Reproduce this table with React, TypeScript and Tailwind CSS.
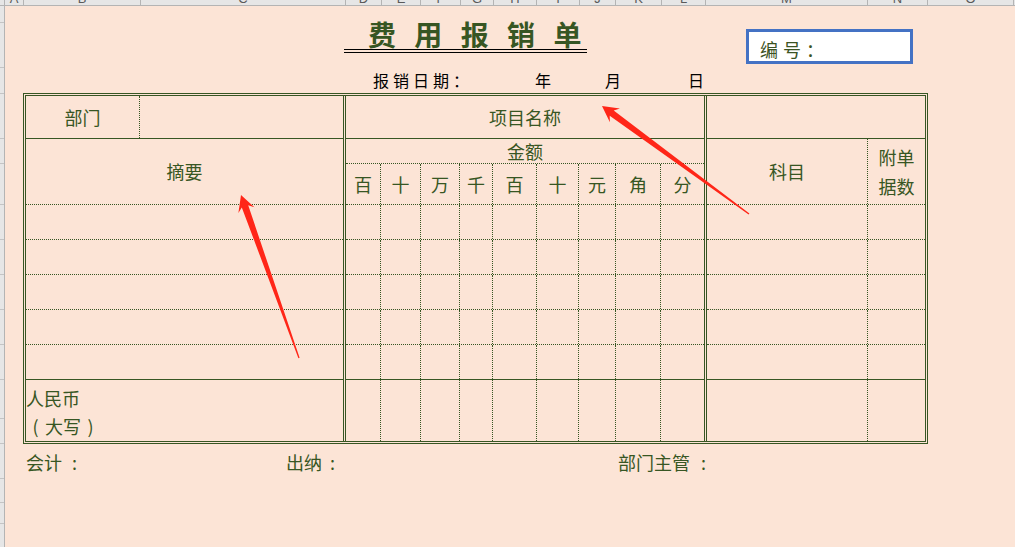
import React from "react";

const digitW = [
  "w-[35px]",
  "w-[40px]",
  "w-[39px]",
  "w-[33px]",
  "w-[44px]",
  "w-[42px]",
  "w-[37px]",
  "w-[45px]",
  "w-[43px]",
];
const digits = ["百", "十", "万", "千", "百", "十", "元", "角", "分"];

const cols: { w: string; l: string }[] = [
  { w: "w-[5px]", l: "" },
  { w: "w-[19px]", l: "A" },
  { w: "w-[117px]", l: "B" },
  { w: "w-[205px]", l: "C" },
  { w: "w-[36px]", l: "D" },
  { w: "w-[39px]", l: "E" },
  { w: "w-[40px]", l: "F" },
  { w: "w-[33px]", l: "G" },
  { w: "w-[43px]", l: "H" },
  { w: "w-[43px]", l: "I" },
  { w: "w-[36px]", l: "J" },
  { w: "w-[46px]", l: "K" },
  { w: "w-[44px]", l: "L" },
  { w: "w-[162px]", l: "M" },
  { w: "w-[60px]", l: "N" },
  { w: "w-[86px]", l: "O" },
];

const rowH = [
  "h-[17px]",
  "h-[45px]",
  "h-[26px]",
  "h-[45px]",
  "h-[25px]",
  "h-[41px]",
  "h-[35px]",
  "h-[35px]",
  "h-[35px]",
  "h-[35px]",
  "h-[35px]",
  "h-[39px]",
  "h-[25px]",
  "h-[35px]",
  "h-[24px]",
  "h-[21px]",
];

function arrowPts(tx: number, ty: number, sx: number, sy: number) {
  const dx = tx - sx;
  const dy = ty - sy;
  const L = Math.hypot(dx, dy);
  const ux = dx / L;
  const uy = dy / L;
  const nx = -uy;
  const ny = ux;
  const H = 16;
  const N = 12;
  const W = 8.5;
  const S = 3.4;
  const T = 0.6;
  const p = (a: number, b: number) => `${a.toFixed(1)},${b.toFixed(1)}`;
  return [
    p(tx, ty),
    p(tx - H * ux + W * nx, ty - H * uy + W * ny),
    p(tx - N * ux + S * nx, ty - N * uy + S * ny),
    p(sx + T * nx, sy + T * ny),
    p(sx - T * nx, sy - T * ny),
    p(tx - N * ux - S * nx, ty - N * uy - S * ny),
    p(tx - H * ux - W * nx, ty - H * uy - W * ny),
  ].join(" ");
}

function DigitCells({ labels }: { labels?: string[] }) {
  return (
    <>
      {digitW.map((w, i) => (
        <div
          key={i}
          className={
            w +
            " h-full flex items-center justify-center border-[#375623] " +
            (i < 8 ? "border-r border-dotted" : "")
          }
        >
          {labels ? labels[i] : null}
        </div>
      ))}
    </>
  );
}

export default function App() {
  const bodyRows = [0, 1, 2, 3, 4];
  return (
    <div className="relative w-[1015px] h-[547px] overflow-hidden bg-[#fce4d6] font-['Noto_Sans_CJK_SC',sans-serif] text-[#375623]">
      {/* Excel column header */}
      <div className="flex h-[6px] bg-[#e6e6e6] border-b border-[#b4b4b4] overflow-hidden">
        {cols.map((c, i) => (
          <div
            key={i}
            className={
              c.w +
              " h-full border-r border-[#b4b4b4] flex items-end justify-center overflow-hidden"
            }
          >
            <span className="text-[13px] leading-[13px] text-[#5a5a5a] font-['Liberation_Sans',sans-serif]">
              {c.l}
            </span>
          </div>
        ))}
        <div className="flex-1" />
      </div>

      <div className="flex">
        {/* Excel row header strip */}
        <div className="w-[5px] h-[541px] bg-[#e6e6e6] border-r border-[#b4b4b4] flex flex-col">
          {rowH.map((h, i) => (
            <div key={i} className={h + " border-b border-[#c4c4c4]"} />
          ))}
        </div>

        {/* Sheet content */}
        <div className="flex-1 flex flex-col">
          {/* Title row */}
          <div className="flex h-[60px]">
            <div className="ml-[339px] mt-[14px] w-[243px]">
              <div className="h-[29px] leading-[28px] text-[28px] font-bold text-[#375623] pl-[24px] tracking-[6px] whitespace-pre">
                费 用 报 销 单
              </div>
              <div className="h-px bg-black" />
              <div className="h-px bg-black mt-[2px]" />
            </div>
            <div className="ml-[159px] mt-[23px] w-[167px] h-[35px] bg-white border-[3px] border-[#4472c4] flex items-center pl-[11px] pt-[5px] text-[18px] leading-[24px] tracking-[5px] text-[#3b5323]">
              编号：
            </div>
          </div>

          {/* Date row */}
          <div className="flex h-[27px] pt-[4px] text-[16px] leading-[20px] text-black">
            <span className="ml-[368px] w-[162px] tracking-[4px]">报销日期：</span>
            <span className="w-[70px]">年</span>
            <span className="w-[83px]">月</span>
            <span>日</span>
          </div>

          {/* Table */}
          <div className="ml-[18px] w-[905px] h-[351px] border-[3px] border-double border-[#375623] flex text-[18px]">
            {/* Left box */}
            <div className="w-[317px] flex flex-col">
              <div className="h-[43px] border-b border-[#375623] flex">
                <div className="w-[114px] h-full border-r border-dotted border-[#375623] flex items-center justify-center">
                  部门
                </div>
              </div>
              <div className="h-[66px] border-b border-dotted border-[#375623] flex items-center justify-center">
                摘要
              </div>
              {bodyRows.map((r) => (
                <div
                  key={r}
                  className={
                    r < 4
                      ? "h-[35px] border-b border-dotted border-[#375623]"
                      : "h-[35px] border-b border-[#375623]"
                  }
                />
              ))}
              <div className="flex-1 pt-[4px] leading-[28px]">
                <div>人民币</div>
                <div className="flex">
                  <span className="w-[19px] text-center">(</span>
                  <span>大写</span>
                  <span className="w-[19px] text-center">)</span>
                </div>
              </div>
            </div>

            {/* Middle box */}
            <div className="w-[364px] border-x-[3px] border-double border-[#375623] flex flex-col">
              <div className="h-[43px] border-b border-[#375623] flex items-center justify-center">
                项目名称
              </div>
              <div className="h-[25px] border-b border-dotted border-[#375623] flex items-center justify-center leading-[24px]">
                金额
              </div>
              <div className="h-[41px] border-b border-dotted border-[#375623] flex">
                <DigitCells labels={digits} />
              </div>
              {bodyRows.map((r) => (
                <div
                  key={r}
                  className={
                    r < 4
                      ? "h-[35px] border-b border-dotted border-[#375623] flex"
                      : "h-[35px] border-b border-[#375623] flex"
                  }
                >
                  <DigitCells />
                </div>
              ))}
              <div className="flex-1 flex">
                <DigitCells />
              </div>
            </div>

            {/* Right box */}
            <div className="w-[218px] flex flex-col">
              <div className="h-[43px] border-b border-[#375623]" />
              <div className="h-[66px] border-b border-dotted border-[#375623] flex">
                <div className="w-[161px] h-full border-r border-dotted border-[#375623] flex items-center justify-center">
                  科目
                </div>
                <div className="flex-1 flex flex-col items-center justify-center leading-[29px]">
                  <div>附单</div>
                  <div>据数</div>
                </div>
              </div>
              {bodyRows.map((r) => (
                <div
                  key={r}
                  className={
                    r < 4
                      ? "h-[35px] border-b border-dotted border-[#375623] flex"
                      : "h-[35px] border-b border-[#375623] flex"
                  }
                >
                  <div className="w-[161px] h-full border-r border-dotted border-[#375623]" />
                </div>
              ))}
              <div className="flex-1 flex">
                <div className="w-[161px] h-full border-r border-dotted border-[#375623]" />
              </div>
            </div>
          </div>

          {/* Footer */}
          <div className="flex mt-[6px] text-[18px] leading-[24px] text-[#375623]">
            <span className="ml-[21px] w-[260px]">
              会计<span className="ml-[10px]">:</span>
            </span>
            <span className="w-[332px]">
              出纳<span className="ml-[8px]">:</span>
            </span>
            <span>
              部门主管<span className="ml-[11px]">:</span>
            </span>
          </div>
        </div>
      </div>

      {/* Red annotation arrows */}
      <svg
        className="absolute left-0 top-0 pointer-events-none"
        width="1015"
        height="547"
        viewBox="0 0 1015 547"
      >
        <polygon points={arrowPts(241, 195, 299, 358)} fill="#ff2618" />
        <polygon points={arrowPts(602, 106, 749, 214)} fill="#ff2618" />
      </svg>
    </div>
  );
}
